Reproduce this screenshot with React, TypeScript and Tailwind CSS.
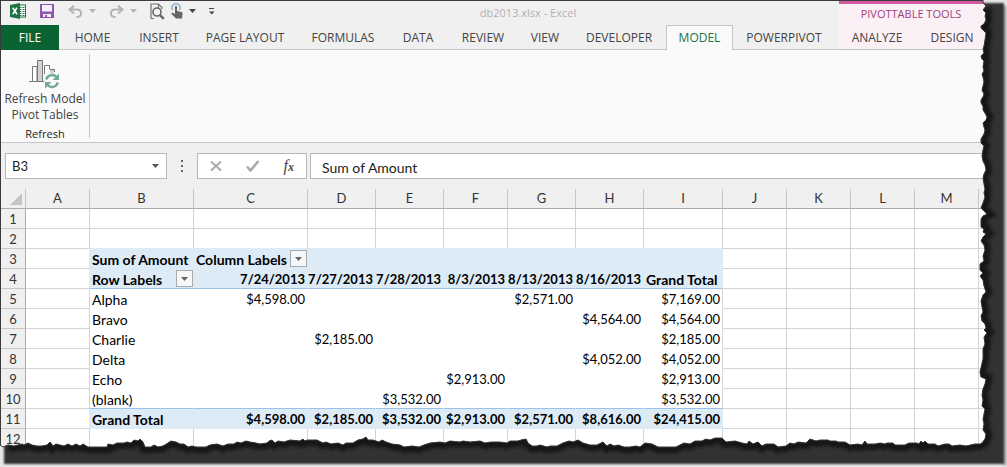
import React from "react";

type Row = { label: string; cells: string[]; bold?: boolean };

const tabs: { name: string; width: string; active?: boolean }[] = [
  { name: "HOME", width: "w-[67px]" },
  { name: "INSERT", width: "w-[66px]" },
  { name: "PAGE LAYOUT", width: "w-[106px]" },
  { name: "FORMULAS", width: "w-[90px]" },
  { name: "DATA", width: "w-[60px]" },
  { name: "REVIEW", width: "w-[70px]" },
  { name: "VIEW", width: "w-[54px]" },
  { name: "DEVELOPER", width: "w-[94px]" },
  { name: "MODEL", width: "w-[67px]", active: true },
  { name: "POWERPIVOT", width: "w-[102px]" },
];

const columns: { name: string; width: string }[] = [
  { name: "A", width: "w-[64px]" },
  { name: "B", width: "w-[104px]" },
  { name: "C", width: "w-[114px]" },
  { name: "D", width: "w-[68px]" },
  { name: "E", width: "w-[68px]" },
  { name: "F", width: "w-[64px]" },
  { name: "G", width: "w-[68px]" },
  { name: "H", width: "w-[68px]" },
  { name: "I", width: "w-[79px]" },
  { name: "J", width: "w-[64px]" },
  { name: "K", width: "w-[64px]" },
  { name: "L", width: "w-[64px]" },
  { name: "M", width: "w-[64px]" },
];

const pivotRows: Record<number, Row> = {
  3: { label: "Sum of Amount", cells: ["Column Labels", "", "", "", "", "", ""], bold: true },
  4: {
    label: "Row Labels",
    cells: ["7/24/2013", "7/27/2013", "7/28/2013", "8/3/2013", "8/13/2013", "8/16/2013", "Grand Total"],
    bold: true,
  },
  5: { label: "Alpha", cells: ["$4,598.00", "", "", "", "$2,571.00", "", "$7,169.00"] },
  6: { label: "Bravo", cells: ["", "", "", "", "", "$4,564.00", "$4,564.00"] },
  7: { label: "Charlie", cells: ["", "$2,185.00", "", "", "", "", "$2,185.00"] },
  8: { label: "Delta", cells: ["", "", "", "", "", "$4,052.00", "$4,052.00"] },
  9: { label: "Echo", cells: ["", "", "", "$2,913.00", "", "", "$2,913.00"] },
  10: { label: "(blank)", cells: ["", "", "$3,532.00", "", "", "", "$3,532.00"] },
  11: {
    label: "Grand Total",
    cells: ["$4,598.00", "$2,185.00", "$3,532.00", "$2,913.00", "$2,571.00", "$8,616.00", "$24,415.00"],
    bold: true,
  },
};

const rightEdge =
  "983,0 983,3 986,6 983,10 986,13 985,16 986,20 984,24 981,26 981,28 984,31 986,33 985,40 984,46 983,49 984,53 981,56 982,59 984,61 983,67 984,71 982,74 983,77 984,82 983,86 982,90 984,94 983,97 981,100 981,103 983,106 983,110 985,113 987,117 986,120 983,123 984,127 985,130 984,134 981,139 981,143 984,146 983,150 982,156 983,161 985,165 986,170 984,174 983,178 984,184 985,189 984,193 985,197 983,203 981,208 984,211 987,214 983,216 981,219 981,227 984,229 983,232 986,234 983,237 981,241 984,245 985,250 983,256 984,261 980,264 980,270 983,273 980,276 983,280 984,286 986,292 983,295 981,301 982,307 983,312 981,316 982,321 985,324 986,328 984,330 987,333 984,337 985,344 983,349 983,359 980,372 981,377 986,379 985,384 983,389 982,395 983,400 982,406 985,409 984,414 983,419 984,424 983,430 986,434 985,439 982,443 980,444";
const bottomEdge =
  "975,444 966,446 960,445 952,446 949,444 945,444 938,446 935,444 928,444 925,441 923,443 921,441 919,444 917,443 909,443 905,445 895,445 893,443 887,443 885,444 880,443 875,444 867,444 865,441 862,445 858,444 850,445 845,442 838,442 836,441 830,441 828,440 820,440 816,441 810,439 806,443 798,442 794,444 790,443 786,446 778,447 774,444 766,444 762,446 758,442 753,444 749,441 747,444 742,443 735,441 726,442 722,438 715,438 710,440 706,439 702,441 695,441 690,444 684,443 676,447 658,447 652,444 645,443 640,447 636,446 630,447 624,447 618,445 614,446 610,444 607,446 603,442 597,445 590,445 583,443 578,440 573,442 569,441 563,443 557,446 550,446 547,447 540,445 537,446 532,446 528,443 526,439 521,440 518,441 510,441 507,443 500,442 491,442 485,443 480,441 470,442 463,441 460,442 450,441 445,443 440,442 430,443 424,445 419,447 412,446 404,447 400,445 392,444 386,442 382,440 379,442 373,440 368,440 366,437 363,439 358,440 353,443 346,443 343,445 338,443 331,444 326,442 323,443 317,440 307,440 305,441 303,439 300,441 290,440 284,442 278,441 275,443 272,440 269,441 267,443 260,444 256,443 250,442 246,441 241,443 237,442 234,444 228,444 223,446 217,444 210,445 206,447 196,447 192,446 188,447 184,444 180,444 176,442 171,441 168,443 163,446 158,447 154,445 151,447 145,447 143,442 140,439 138,441 134,440 131,443 127,442 124,443 117,443 113,445 108,444 107,447 88,447 83,444 80,446 76,444 72,446 68,444 64,446 56,444 53,446 50,442 47,445 42,446 37,446 32,445 28,443 24,445 22,444 14,446 8,445 3,447 0,445";

function TornEdge() {
  return (
    <svg
      className="pointer-events-none absolute inset-0 h-full w-full"
      viewBox="0 0 1007 467"
      preserveAspectRatio="none"
      aria-hidden="true"
    >
      <defs>
        <clipPath id="outside">
          <polygon points={`${rightEdge} ${bottomEdge} 0,467 1007,467 1007,0`} />
        </clipPath>
        <filter id="soft" x="-5%" y="-5%" width="110%" height="110%">
          <feGaussianBlur stdDeviation="1.1" />
        </filter>
        <filter id="softer" x="-5%" y="-5%" width="110%" height="110%">
          <feGaussianBlur stdDeviation="1.8" />
        </filter>
      </defs>
      <g clipPath="url(#outside)">
        <rect width="1007" height="467" fill="#e6e6e6" />
        <rect x="1003" y="6" width="3" height="459" fill="#9c9c9c" filter="url(#soft)" />
        <rect x="4" y="3" width="1000" height="461" fill="#333333" filter="url(#soft)" />
        <polyline
          points={`985,8 ${rightEdge.slice(rightEdge.indexOf("986,13"))} ${bottomEdge.slice(0, bottomEdge.lastIndexOf(" 3,447"))}`}
          fill="none"
          stroke="#141414"
          strokeWidth="12"
          filter="url(#softer)"
        />
      </g>
      <polyline points={`${rightEdge} ${bottomEdge}`} fill="none" stroke="#3a3a3a" strokeWidth="1" />
    </svg>
  );
}

function Caret({ className }: { className: string }) {
  return (
    <svg viewBox="0 0 8 4" className={`h-1 w-2 shrink-0 ${className}`} fill="currentColor" aria-hidden="true">
      <path d="M0 0h7L3.5 4z" />
    </svg>
  );
}

function ExcelLogo() {
  return (
    <svg viewBox="0 0 16 16" className="h-4 w-4 shrink-0" aria-hidden="true">
      <rect x="8" y="2" width="7.5" height="12" fill="#fff" stroke="#1f7244" />
      <path d="M10 4.5h1.5M12.5 4.5h2M10 6.5h1.5M12.5 6.5h2M10 8.5h1.5M12.5 8.5h2M10 10.5h1.5M12.5 10.5h2M10 12.5h1.5M12.5 12.5h2" stroke="#1f7244" />
      <path d="M0 2l10-2v16L0 14z" fill="#1f7244" />
      <path d="M2.7 4.8l4.3 6.4M7 4.8l-4.3 6.4" stroke="#fff" strokeWidth="1.6" />
    </svg>
  );
}

function SaveIcon() {
  return (
    <svg viewBox="0 0 14 14" className="h-3.5 w-3.5" aria-hidden="true">
      <path d="M0 0h14v14H0z" fill="#8c57ad" />
      <path d="M2 1h10v6.5H2zM3 10h8v3H7v-2H5v2H3z" fill="#f4f0f7" />
    </svg>
  );
}

function UndoIcon({ flip }: { flip?: boolean }) {
  return (
    <svg
      viewBox="0 0 15 13"
      className={`h-[13px] w-[15px] shrink-0 ${flip ? "-scale-x-100" : ""}`}
      fill="none"
      stroke="#b3b3b3"
      strokeWidth="2"
      aria-hidden="true"
    >
      <path d="M6 .7L1.5 4.5L6 8.5M2 4.5h7c5 0 5.5 6.500 1 7.5H8.5" />
    </svg>
  );
}

function PreviewIcon() {
  return (
    <svg viewBox="0 0 15 17" className="h-[17px] w-[15px]" fill="none" aria-hidden="true">
      <path d="M4 15.5H1V1h7.5L12 4.5V6M8.5 1v4" stroke="#737373" strokeWidth="1.2" />
      <circle cx="7" cy="9" r="4" fill="#f4f4f4" stroke="#666" strokeWidth="1.6" />
      <path d="M9.8 11.8l4 4" stroke="#666" strokeWidth="2.4" />
    </svg>
  );
}

function TouchIcon() {
  return (
    <svg viewBox="0 0 12 16" className="h-4 w-3 shrink-0" aria-hidden="true">
      <path d="M1.7 7A4 4 0 1 1 8.3 7" fill="none" stroke="#9dbddd" strokeWidth="2" />
      <path d="M4 4c0-1.400 2-1.400 2 0v4l4.500 1c.8.200 1.200.7 1.100 1.500L11 15.500H5L.5 11c-.6-1 .5-1.700 1.400-1.200L4 11z" fill="#666" />
    </svg>
  );
}

function ChartRefreshIcon() {
  return (
    <svg viewBox="0 0 31 29" className="h-[29px] w-[31px]" fill="none" aria-hidden="true">
      <path d="M0 21.5h17" stroke="#777" />
      <path d="M3.5 21V6.5H8V21M15.5 14V5.5h5V9M20.5 9.5h5V12" fill="#fff" stroke="#777" />
      <path d="M21 10h4v4h-4z" fill="#d0d0d0" />
      <path d="M8.5 21.5V.5h5v21z" fill="#d2d2d2" stroke="#777" />
      <circle cx="23" cy="21" r="7.8" fill="#fafafa" />
      <path d="M17.2 19.5c1.5-5 7.3-5.800 10.3-2.500M28.8 22.5c-1.5 5-7.3 5.800-10.3 2.500" stroke="#72a896" strokeWidth="2.5" />
      <path d="M30 13.5V20h-6.500zM16 28.5V22h6.500z" fill="#72a896" />
    </svg>
  );
}

function QuickAccess() {
  return (
    <div className="flex h-6 w-[216px] shrink-0 items-center pb-1 pl-[9px]">
      <ExcelLogo />
      <button aria-label="Save" className="ml-3.5 shrink-0">
        <SaveIcon />
      </button>
      <button aria-label="Undo" className="ml-3.5 flex shrink-0 items-center gap-1.5">
        <UndoIcon />
        <Caret className="text-[#b5b5b5]" />
      </button>
      <button aria-label="Redo" className="ml-3 flex shrink-0 items-center gap-1.5">
        <UndoIcon flip />
        <Caret className="text-[#b5b5b5]" />
      </button>
      <button aria-label="Print preview" className="ml-3 shrink-0">
        <PreviewIcon />
      </button>
      <button aria-label="Touch mode" className="ml-1.5 flex shrink-0 items-center gap-1.5">
        <TouchIcon />
        <Caret className="text-[#444]" />
      </button>
      <button aria-label="Customize toolbar" className="ml-3 shrink-0">
        <svg viewBox="0 0 6 7" className="h-[7px] w-1.5" fill="#444" aria-hidden="true">
          <path d="M0 0h5v1H0zM0 3.500h5.500L2.800 6.500z" />
        </svg>
      </button>
    </div>
  );
}

function Header() {
  return (
    <header className="flex bg-[#f0f0f0]">
      <div className="flex min-w-0 flex-1 flex-col">
        <div className="flex">
          <QuickAccess />
          <h1 className="flex-1 text-center text-[11px] leading-6 text-[#b0b0b0]">db2013.xlsx - Excel</h1>
        </div>
        <nav className="flex h-[25px] text-[12px] text-[#444]">
          <button className="w-[58px] shrink-0 bg-[#0a6332] text-white">FILE</button>
          {tabs.map((tab) => (
            <button
              key={tab.name}
              className={`shrink-0 whitespace-nowrap leading-5 ${tab.width} ${
                tab.active
                  ? "border border-b-0 border-[#c6c6c6] bg-[#fafafa] text-[#217346]"
                  : "border-b border-[#c6c6c6] pt-0.5"
              }`}
            >
              {tab.name}
            </button>
          ))}
          <div className="flex-1 border-b border-[#c6c6c6]" />
        </nav>
      </div>
      <div className="w-[168px] shrink-0 border-b border-[#c6c6c6] bg-[#fcf0f7]">
        <div className="h-6 border-t-[3px] border-[#cf5a9e] pr-6 text-center text-[11px] leading-[19px] text-[#a23f7c]">
          PIVOTTABLE TOOLS
        </div>
        <div className="flex pt-0.5 text-[12px] leading-[22px] text-[#444]">
          <button className="w-[76px]">ANALYZE</button>
          <button className="w-[74px]">DESIGN</button>
        </div>
      </div>
    </header>
  );
}

function Ribbon() {
  return (
    <section className="flex h-[93px] border-b border-[#c6c6c6] bg-[#fafafa] py-1">
      <div className="flex w-[89px] flex-col items-center border-r border-[#c6c6c6] pt-1.5">
        <button className="flex flex-col items-center text-[12px] leading-4 text-[#444]">
          <ChartRefreshIcon />
          <span className="mt-0.5 whitespace-nowrap">Refresh Model</span>
          <span className="whitespace-nowrap">Pivot Tables</span>
        </button>
        <h2 className="mt-[3px] text-[11px] leading-4 text-[#222]">Refresh</h2>
      </div>
    </section>
  );
}

function FormulaBar() {
  return (
    <section className="flex items-center bg-[#f0f0f0] py-2.5 pl-1 font-['Lato',sans-serif] text-[14px] text-[#222]">
      <div className="flex h-[26px] w-[162px] items-center border border-[#b8b8b8] bg-white px-1.5">
        <input aria-label="Name box" defaultValue="B3" className="min-w-0 flex-1 pt-0.5 text-[13px] outline-none" />
        <button aria-label="Open name list">
          <Caret className="text-[#555]" />
        </button>
      </div>
      <div className="flex w-[30px] justify-center">
        <svg viewBox="0 0 2 12" className="h-3 w-0.5" fill="#666" aria-hidden="true">
          <path d="M0 0h2v2H0zM0 5h2v2H0zM0 10h2v2H0z" />
        </svg>
      </div>
      <div className="flex h-[26px] w-[110px] items-center justify-between border border-[#b8b8b8] bg-white px-3">
        <button aria-label="Cancel">
          <svg viewBox="0 0 12 12" className="h-3 w-3" stroke="#aaa" strokeWidth="2" aria-hidden="true">
            <path d="M1 1.5l10 9M11 1.5l-10 9" />
          </svg>
        </button>
        <button aria-label="Enter">
          <svg viewBox="0 0 14 12" className="h-3 w-3.5" fill="none" stroke="#aaa" strokeWidth="2.6" aria-hidden="true">
            <path d="M1 6.5l3.500 4L12.5 1" />
          </svg>
        </button>
        <button aria-label="Insert function" className="font-['Liberation_Serif',serif] text-[16px] leading-5 text-[#444] italic">
          f<span className="text-[12px] font-bold">x</span>
        </button>
      </div>
      <input
        aria-label="Formula"
        defaultValue="Sum of Amount"
        className="ml-[3px] h-[26px] min-w-0 flex-1 border border-[#b8b8b8] bg-white px-[11px] pt-0.5 outline-none"
      />
    </section>
  );
}

function FilterButton({ label }: { label: string }) {
  return (
    <button
      aria-label={label}
      className="flex h-[17px] w-[17px] shrink-0 items-center justify-center border border-[#ababab] bg-[#f6f7f9]"
    >
      <Caret className="ml-px text-[#666]" />
    </button>
  );
}

function Cell({ row, col }: { row: number; col: number }) {
  const filled = row === 3 || row === 4 || row === 11;
  const inside = row >= 3 && row <= 11 && col >= 1 && col <= 8;

  if (!inside) {
    const beside = filled && col === 0;
    const above = row === 2 && col >= 1 && col <= 8;
    return (
      <td
        className={`h-5 border-r border-b ${beside ? "border-r-[#ddebf7]" : "border-r-[#d4d4d4]"} ${
          above ? "border-b-[#ddebf7]" : "border-b-[#d4d4d4]"
        }`}
      />
    );
  }

  const data = pivotRows[row];
  const text = col === 1 ? data.label : data.cells[col - 2];
  const left = col === 1 || row === 3 || (row === 4 && col === 8);
  const filter = (row === 3 && col === 2) || (row === 4 && col === 1);
  const bottom = row === 4 || row === 10 ? "border-b-[#9bc2e6]" : filled ? "border-b-[#ddebf7]" : "border-b-white";
  const right = filled ? "border-r-[#ddebf7]" : col === 8 ? "border-r-[#d4d4d4]" : "border-r-white";
  const align = filter ? "justify-between" : left ? "" : "justify-end pr-0.5";

  return (
    <td
      className={`h-5 border-r border-b p-0 whitespace-nowrap ${bottom} ${right} ${filled ? "bg-[#ddebf7]" : ""} ${
        data.bold ? "font-bold" : ""
      }`}
    >
      <div className={`flex h-[19px] items-center pl-0.5 ${align}`}>
        <span className={`pt-0.5 ${left ? "text-[14px]" : "text-[13px]"}`}>{text}</span>
        {filter && <FilterButton label={`Filter ${text}`} />}
      </div>
    </td>
  );
}

function Sheet() {
  return (
    <table className="w-full table-fixed border-separate border-spacing-0 bg-white font-['Lato',sans-serif] text-[13px] leading-[19px] text-black">
      <colgroup>
        <col className="w-[25px]" />
        {columns.map((c) => (
          <col key={c.name} className={c.width} />
        ))}
        <col />
      </colgroup>
      <thead>
        <tr className="bg-[#f0f0f0] text-[#333]">
          <th className="h-5 border-r border-b border-r-[#c6c6c6] border-b-[#ababab] p-0">
            <svg viewBox="0 0 12 12" className="mr-[3px] ml-auto h-3 w-3" aria-hidden="true">
              <path d="M12 0v12H0z" fill="#c4c4c4" />
            </svg>
          </th>
          {columns.map((c) => (
            <th key={c.name} className="h-5 border-r border-b border-r-[#c6c6c6] border-b-[#ababab] p-0 font-normal">
              {c.name}
            </th>
          ))}
          <th className="h-5 border-b border-b-[#ababab] p-0" />
        </tr>
      </thead>
      <tbody>
        {Array.from({ length: 12 }, (_, i) => i + 1).map((row) => (
          <tr key={row}>
            <th className="h-5 border-r border-b border-r-[#ababab] border-b-[#c6c6c6] bg-[#f0f0f0] p-0 font-normal text-[#333]">
              <div className="h-[19px] pt-px leading-[18px]">{row}</div>
            </th>
            {columns.map((c, col) => (
              <Cell key={c.name} row={row} col={col} />
            ))}
            <td className="h-5 border-b border-[#d4d4d4]" />
          </tr>
        ))}
      </tbody>
    </table>
  );
}

export default function App() {
  return (
    <div className="relative min-w-[1007px] overflow-hidden bg-white pb-[18px] font-['Open_Sans',sans-serif]">
      <main className="border-t border-l border-[#3c3a3d]">
        <Header />
        <Ribbon />
        <FormulaBar />
        <Sheet />
      </main>
      <TornEdge />
    </div>
  );
}
